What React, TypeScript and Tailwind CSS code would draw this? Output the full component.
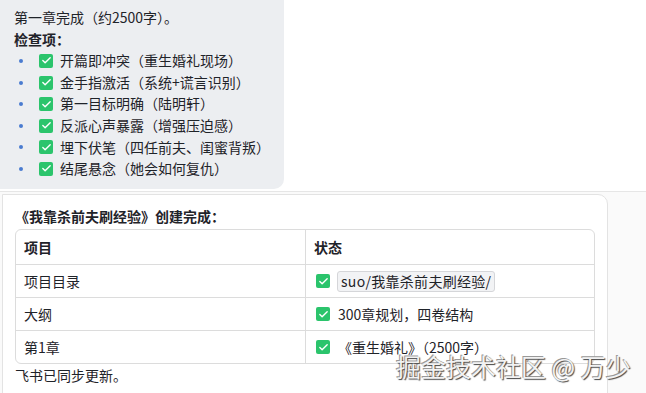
import { Check } from 'lucide-react';

const ITEMS = [
  '开篇即冲突（重生婚礼现场）',
  '金手指激活（系统+谎言识别）',
  '第一目标明确（陆明轩）',
  '反派心声暴露（增强压迫感）',
  '埋下伏笔（四任前夫、闺蜜背叛）',
  '结尾悬念（她会如何复仇）',
];

const font = { fontFamily: '"Noto Sans CJK SC", "Noto Sans", sans-serif' };

function Tick() {
  return (
    <span className="w-[14px] h-[14px] rounded-[2px] bg-[#2bc46c] flex items-center justify-center shrink-0">
      <Check className="w-[11px] h-[11px] text-white" strokeWidth={3} />
    </span>
  );
}

export default function App() {
  return (
    <div className="relative w-[646px] h-[393px] overflow-hidden bg-[#fafafa] text-[14px] text-[#1f2329]" style={font}>
      {/* Chat bubble */}
      <div className="h-[192px] bg-white border-b border-[#e6e6e6]">
        <div className="w-[284px] h-[189px] bg-[#eceef1] rounded-br-[10px] pl-[14px] pt-[7px] leading-[21.6px]">
          <p>第一章完成（约2500字）。</p>
          <p className="font-bold">检查项：</p>
          <ul>
            {ITEMS.map(it => (
              <li key={it} className="flex items-center">
                <span className="w-[4px] h-[4px] rounded-full bg-[#4a7bd0] ml-[5px] mr-[16px]" />
                <Tick />
                <span className="ml-[7px]">{it}</span>
              </li>
            ))}
          </ul>
        </div>
      </div>

      {/* Result card */}
      <div className="ml-[2px] mt-[2px] w-[606px] h-[210px] bg-white border border-[#e3e3e3] rounded-tr-[10px] px-[12px] pt-[11px]">
        <p className="font-bold leading-[20px] mb-[3px]">《我靠杀前夫刷经验》创建完成：</p>
        <div className="w-[580px] border border-[#dcdcdc] rounded-[6px] overflow-hidden">
          <div className="flex h-[35px] border-b border-[#dcdcdc] font-bold">
            <div className="w-[290px] border-r border-[#dcdcdc] pl-[8px] flex items-center">项目</div>
            <div className="flex-1 pl-[8px] flex items-center">状态</div>
          </div>
          <div className="flex h-[33px] border-b border-[#dcdcdc]">
            <div className="w-[290px] border-r border-[#dcdcdc] pl-[8px] flex items-center">项目目录</div>
            <div className="flex-1 pl-[10px] flex items-center gap-[7px]">
              <Tick />
              <code className="px-[3px] h-[21px] flex items-center bg-[#f2f3f5] border border-[#d5d6d9] rounded-[3px] text-[14px] tracking-[0.3px]" style={font}>suo/我靠杀前夫刷经验/</code>
            </div>
          </div>
          <div className="flex h-[33px] border-b border-[#dcdcdc]">
            <div className="w-[290px] border-r border-[#dcdcdc] pl-[8px] flex items-center">大纲</div>
            <div className="flex-1 pl-[10px] flex items-center gap-[8px]">
              <Tick />
              <span>300章规划，四卷结构</span>
            </div>
          </div>
          <div className="flex h-[32px]">
            <div className="w-[290px] border-r border-[#dcdcdc] pl-[8px] flex items-center">第1章</div>
            <div className="flex-1 pl-[10px] flex items-center gap-[8px]">
              <Tick />
              <span>《重生婚礼》（2500字）</span>
            </div>
          </div>
        </div>
        <p className="leading-[18px] mt-[2px]">飞书已同步更新。</p>
      </div>

      {/* Watermark */}
      <div className="absolute left-[396px] top-[350px] text-[25px] leading-[32px] text-[#f2f2f2] [text-shadow:1px_1px_1px_#444,-1px_-1px_0_#999]">
        掘金技术社区 @ 万少
      </div>
    </div>
  );
}
